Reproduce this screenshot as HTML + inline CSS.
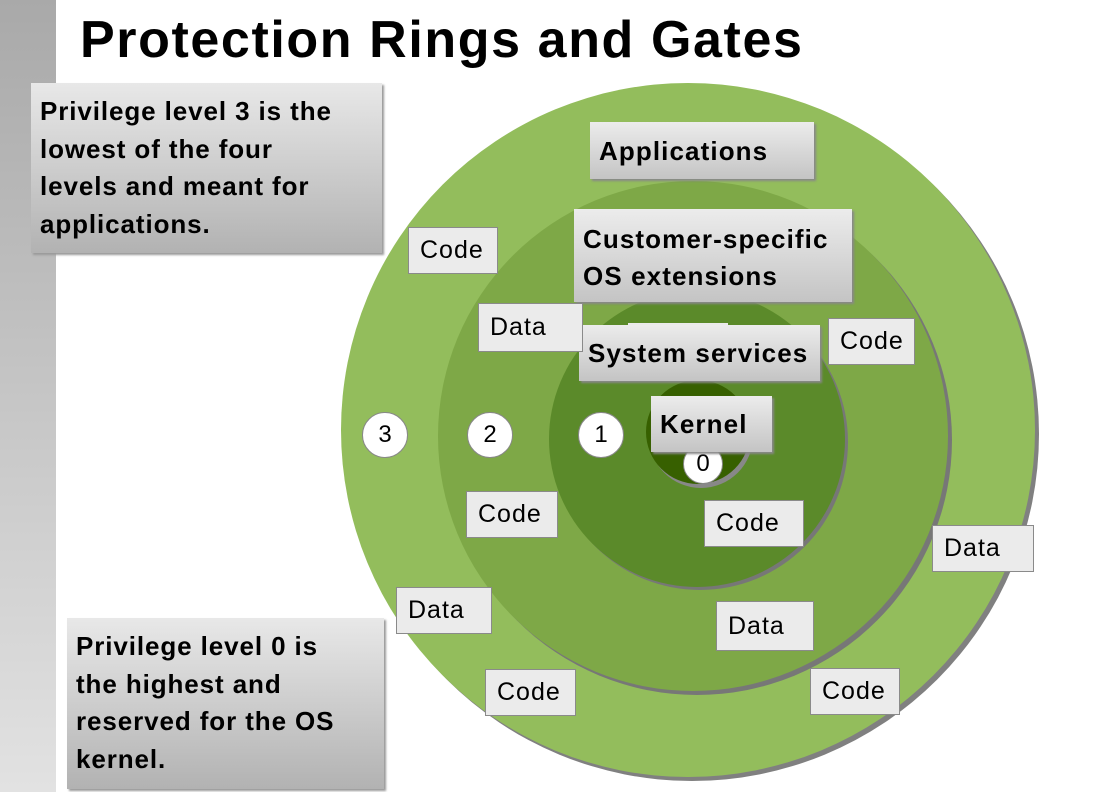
<!DOCTYPE html>
<html><head><style>
body{margin:0;width:1107px;height:792px;overflow:hidden;background:#fff;position:relative;font-family:"Liberation Sans",sans-serif}
.bar{position:absolute;left:0;top:0;width:56px;height:792px;background:linear-gradient(#a9a9a9,#e2e2e2)}
h1{position:absolute;left:80px;top:10px;margin:0;font-size:52px;font-weight:bold;letter-spacing:1.6px}
.co{position:absolute;background:linear-gradient(#e8e8e8,#b2b2b2);box-shadow:2px 2px 2px #999;font-weight:bold;font-size:26px;letter-spacing:0.9px;line-height:37.5px;box-sizing:border-box;padding:10px 0 0 9px;white-space:nowrap}
.lb{position:absolute;background:#ebebeb;border:1px solid #8a8a8a;font-size:25px;letter-spacing:1px;box-sizing:border-box;display:flex;align-items:center;padding-left:11px}
.hb{position:absolute;background:linear-gradient(#ececec,#c4c4c4);box-shadow:2px 2px 2px #888;font-weight:bold;font-size:26px;letter-spacing:1.1px;box-sizing:border-box;padding-left:9px;line-height:34px;white-space:nowrap}
.n{position:absolute;background:#fff;border-radius:50%;border:1px solid #888;font-size:24px;display:flex;align-items:center;justify-content:center;box-sizing:border-box}
</style></head><body>
<div class="bar"></div>
<h1>Protection Rings and Gates</h1>
<svg style="position:absolute;left:0;top:0" width="1107" height="792">
<circle cx="692" cy="434" r="347" fill="#808080"/>
<circle cx="688" cy="430" r="347" fill="#93bd5c"/>
<circle cx="697" cy="440" r="255" fill="#777"/>
<circle cx="693" cy="436" r="255" fill="#7ea847"/>
<circle cx="700" cy="442" r="148" fill="#777"/>
<circle cx="697" cy="439" r="148" fill="#5b8a2a"/>
<circle cx="701" cy="436" r="52" fill="#888"/>
<circle cx="698" cy="432" r="52" fill="#376000"/>
</svg>
<div class="co" style="left:31px;top:83px;width:351px;height:170px">Privilege level 3 is the<br>lowest of the four<br>levels and meant for<br>applications.</div>
<div class="co" style="left:67px;top:618px;width:317px;height:171px">Privilege level 0 is<br>the highest and<br>reserved for the OS<br>kernel.</div>
<div class="hb" style="left:590px;top:122px;width:224px;height:57px;padding-top:12px">Applications</div>
<div class="hb" style="left:574px;top:209px;width:278px;height:93px;padding-top:12px;line-height:37px">Customer-specific<br>OS extensions</div>
<div class="lb" style="left:628px;top:323px;width:100px;height:10px;border:none"></div>
<div class="hb" style="left:579px;top:325px;width:241px;height:56px;padding-top:11px">System services</div>
<div class="n" style="left:683px;top:444px;width:40px;height:40px">0</div>
<div class="hb" style="left:651px;top:396px;width:121px;height:56px;padding-top:11px">Kernel</div>
<div class="n" style="left:362px;top:412px;width:46px;height:46px">3</div>
<div class="n" style="left:467px;top:412px;width:46px;height:46px">2</div>
<div class="n" style="left:578px;top:412px;width:46px;height:46px">1</div>
<div class="lb" style="left:408px;top:227px;width:90px;height:47px">Code</div>
<div class="lb" style="left:478px;top:303px;width:105px;height:49px">Data</div>
<div class="lb" style="left:828px;top:318px;width:87px;height:47px">Code</div>
<div class="lb" style="left:466px;top:491px;width:92px;height:47px">Code</div>
<div class="lb" style="left:704px;top:500px;width:100px;height:47px">Code</div>
<div class="lb" style="left:932px;top:525px;width:102px;height:47px">Data</div>
<div class="lb" style="left:396px;top:587px;width:96px;height:47px">Data</div>
<div class="lb" style="left:716px;top:601px;width:98px;height:50px">Data</div>
<div class="lb" style="left:485px;top:669px;width:91px;height:47px">Code</div>
<div class="lb" style="left:810px;top:668px;width:90px;height:47px">Code</div>
</body></html>
